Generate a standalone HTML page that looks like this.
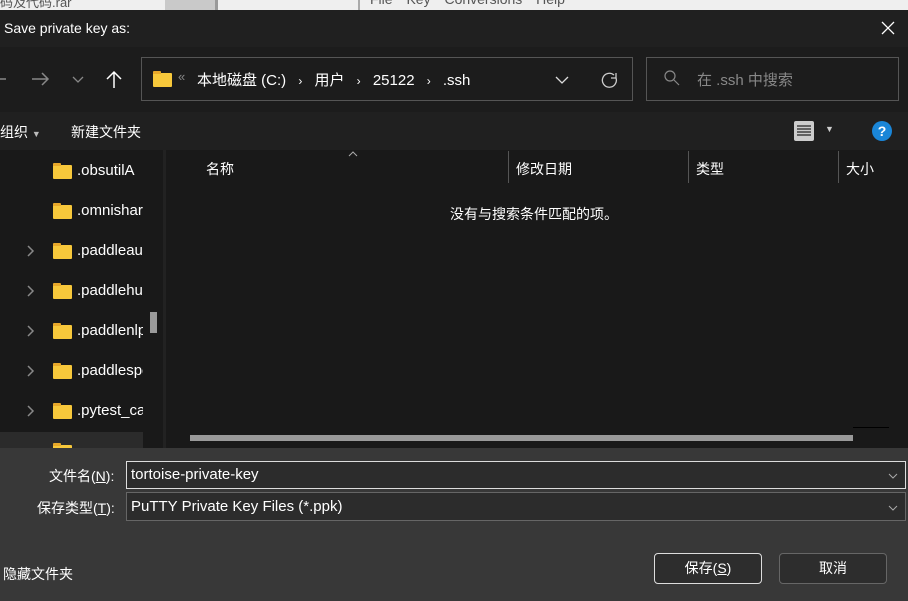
<!DOCTYPE html>
<html><head><meta charset="utf-8"><style>
*{margin:0;padding:0;box-sizing:border-box}
body{width:908px;height:601px;overflow:hidden;background:#191919;font-family:"Liberation Sans","Noto Sans CJK SC",sans-serif;color:#fff;font-size:14px;position:relative}
.a{position:absolute}
.t{white-space:nowrap}
.fold{position:absolute;width:19px;height:14px;background:#f7c83b;border-radius:1px}
.fold:before{content:"";position:absolute;left:0;top:-2px;width:8px;height:3px;background:#e8a82a;border-radius:1px 1px 0 0}
.chev{position:absolute}
.side{position:absolute;left:0;top:150px;width:143px;height:298px;overflow:hidden;background:#191919}
.side .t{position:absolute;font-size:15px}
</style></head><body>
<div class="a" style="left:0;top:0;width:908px;height:10px;background:#efefef"></div>
<div class="a" style="left:165px;top:0;width:50px;height:10px;background:#c9c9c9"></div>
<div class="a" style="left:215px;top:0;width:3px;height:10px;background:#999"></div>
<div class="a" style="left:358px;top:0;width:2px;height:10px;background:#aaa"></div>
<div class="a t" style="left:370px;top:-9px;color:#555;font-size:14px;word-spacing:10px">File Key Conversions Help</div>
<div class="a t" style="left:0;top:-8px;color:#555;font-size:13px">码及代码.rar</div>
<div class="a" style="left:0;top:10px;width:908px;height:37px;background:#202020"></div>
<div class="a t" style="left:4px;top:20px;font-size:14px">Save private key as:</div>
<svg class="a" style="left:881px;top:21px" width="14" height="14"><path d="M1 1L13 13M13 1L1 13" stroke="#fff" stroke-width="1.3"/></svg>
<div class="a" style="left:0;top:47px;width:908px;height:65px;background:#1c1c1c"></div>
<svg class="a" style="left:0;top:70px" width="130" height="20"><path d="M0 9H6" stroke="#888" stroke-width="1.5"/><path d="M32 9H48M42 3L48 9L42 15" stroke="#888" stroke-width="1.5" fill="none"/><path d="M73 7L78 12L83 7" stroke="#888" stroke-width="1.3" fill="none"/><path d="M114 2V18M107 9L114 2L121 9" stroke="#fff" stroke-width="1.5" fill="none"/></svg>
<div class="a" style="left:141px;top:57px;width:492px;height:44px;border:1px solid #555"></div>
<div class="fold" style="left:153px;top:73px"></div>
<div class="a t" style="left:178px;top:69px;color:#888;font-size:13px">«</div>
<div class="a t" style="left:197px;top:69px;font-size:15px">本地磁盘 (C:) <span style="font-size:12px;margin:0 8px">›</span> 用户 <span style="font-size:12px;margin:0 8px">›</span> 25122 <span style="font-size:12px;margin:0 8px">›</span> .ssh</div>
<svg class="a" style="left:554px;top:72px" width="70" height="18"><path d="M2 5L8 11L14 5" stroke="#ddd" stroke-width="1.3" fill="none"/><path d="M60 3A7 7 0 1 0 62 6M62 1V6H57" stroke="#ccc" stroke-width="1.3" fill="none"/></svg>
<div class="a" style="left:646px;top:57px;width:253px;height:44px;border:1px solid #555"></div>
<svg class="a" style="left:664px;top:70px" width="16" height="16"><circle cx="6" cy="6" r="5" stroke="#888" stroke-width="1.2" fill="none"/><path d="M10 10L15 15" stroke="#888" stroke-width="1.2"/></svg>
<div class="a t" style="left:697px;top:69px;color:#888;font-size:15px">在 .ssh 中搜索</div>
<div class="a" style="left:0;top:112px;width:908px;height:38px;background:#202020"></div>
<div class="a t" style="left:0;top:122px;font-size:14px">组织 <span style="font-size:9px;color:#bbb">▼</span></div>
<div class="a t" style="left:71px;top:122px;font-size:14px">新建文件夹</div>
<div class="a" style="left:794px;top:121px;width:20px;height:20px;background:#ccc;border-radius:2px"></div>
<svg class="a" style="left:796px;top:124px" width="16" height="14"><path d="M1 2H15M1 5H15M1 8H15M1 11H15" stroke="#222" stroke-width="1.2"/></svg>
<div class="a t" style="left:825px;top:124px;font-size:9px;color:#ccc">▼</div>
<div class="a" style="left:872px;top:121px;width:20px;height:20px;border-radius:50%;background:#1a86d8;color:#fff;font-size:14px;text-align:center;line-height:20px;font-weight:bold">?</div>
<div class="side">
<div class="a" style="left:0;top:282px;width:143px;height:16px;background:#2b2b2b"></div>
<div class="fold" style="left:53px;top:15px"></div><div class="t" style="left:77px;top:12px">.obsutilA</div>
<div class="fold" style="left:53px;top:55px"></div><div class="t" style="left:77px;top:52px">.omnishare</div>
<svg class="chev" style="left:27px;top:95px" width="8" height="12"><path d="M1 1L6 6L1 11" stroke="#888" stroke-width="1.5" fill="none"/></svg><div class="fold" style="left:53px;top:95px"></div><div class="t" style="left:77px;top:92px">.paddleaudio</div>
<svg class="chev" style="left:27px;top:135px" width="8" height="12"><path d="M1 1L6 6L1 11" stroke="#888" stroke-width="1.5" fill="none"/></svg><div class="fold" style="left:53px;top:135px"></div><div class="t" style="left:77px;top:132px">.paddlehub</div>
<svg class="chev" style="left:27px;top:175px" width="8" height="12"><path d="M1 1L6 6L1 11" stroke="#888" stroke-width="1.5" fill="none"/></svg><div class="fold" style="left:53px;top:175px"></div><div class="t" style="left:77px;top:172px">.paddlenlp</div>
<svg class="chev" style="left:27px;top:215px" width="8" height="12"><path d="M1 1L6 6L1 11" stroke="#888" stroke-width="1.5" fill="none"/></svg><div class="fold" style="left:53px;top:215px"></div><div class="t" style="left:77px;top:212px">.paddlespeech</div>
<svg class="chev" style="left:27px;top:255px" width="8" height="12"><path d="M1 1L6 6L1 11" stroke="#888" stroke-width="1.5" fill="none"/></svg><div class="fold" style="left:53px;top:255px"></div><div class="t" style="left:77px;top:252px">.pytest_cache</div>
<div class="fold" style="left:53px;top:295px"></div>
</div>
<div class="a" style="left:150px;top:312px;width:7px;height:21px;background:#9a9a9a"></div>
<div class="a" style="left:163px;top:150px;width:3px;height:298px;background:#222"></div>
<div class="a t" style="left:206px;top:159px;font-size:14px">名称</div>
<svg class="a" style="left:348px;top:151px" width="10" height="6"><path d="M1 5L5 1L9 5" stroke="#aaa" fill="none"/></svg>
<div class="a" style="left:508px;top:151px;width:1px;height:32px;background:#555"></div>
<div class="a t" style="left:516px;top:159px">修改日期</div>
<div class="a" style="left:688px;top:151px;width:1px;height:32px;background:#555"></div>
<div class="a t" style="left:696px;top:159px">类型</div>
<div class="a" style="left:838px;top:151px;width:1px;height:32px;background:#555"></div>
<div class="a t" style="left:846px;top:159px">大小</div>
<div class="a t" style="left:450px;top:204px">没有与搜索条件匹配的项。</div>
<div class="a" style="left:190px;top:435px;width:663px;height:6px;background:#999"></div>
<div class="a" style="left:853px;top:427px;width:36px;height:1px;background:#000"></div>
<div class="a" style="left:0;top:448px;width:908px;height:153px;background:#383838"></div>
<div class="a t" style="left:49px;top:466px">文件名(<u>N</u>):</div>
<div class="a" style="left:126px;top:461px;width:780px;height:28px;border:1px solid #ddd;background:#2c2c2c"></div>
<div class="a t" style="left:131px;top:466px;font-size:15px">tortoise-private-key</div>
<div class="a t" style="left:37px;top:498px">保存类型(<u>T</u>):</div>
<div class="a" style="left:126px;top:492px;width:780px;height:29px;border:1px solid #666;background:#2c2c2c"></div>
<div class="a t" style="left:131px;top:498px;font-size:15px">PuTTY Private Key Files (*.ppk)</div>
<svg class="a" style="left:888px;top:472px" width="10" height="40"><path d="M1 2L5 6L9 2M1 34L5 38L9 34" stroke="#aaa" fill="none"/></svg>
<div class="a t" style="left:3px;top:564px">隐藏文件夹</div>
<div class="a" style="left:654px;top:553px;width:108px;height:31px;border:1px solid #ddd;border-radius:4px;background:#2d2d2d;text-align:center;line-height:29px">保存(<u>S</u>)</div>
<div class="a" style="left:779px;top:553px;width:108px;height:31px;border:1px solid #666;border-radius:4px;background:#2d2d2d;text-align:center;line-height:29px">取消</div>
</body></html>
